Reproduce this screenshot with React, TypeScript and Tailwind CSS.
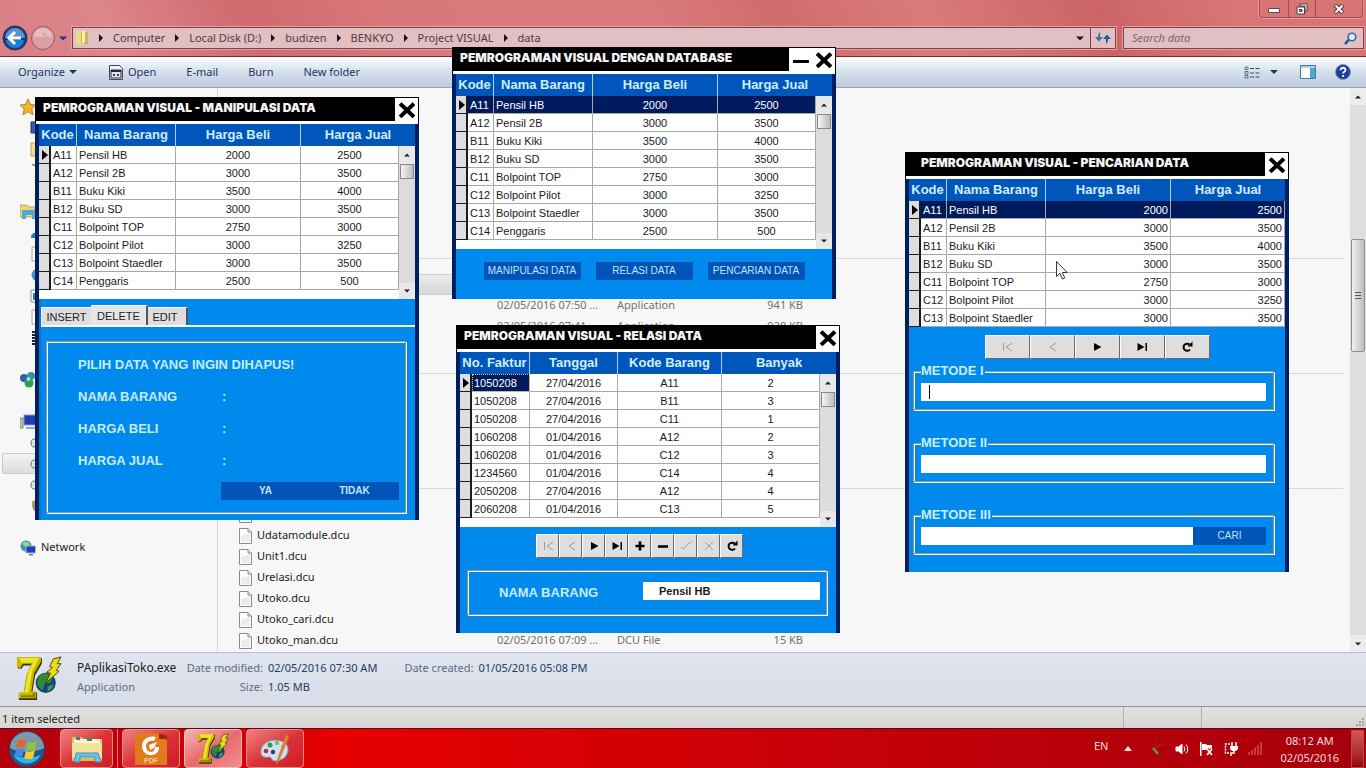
import type { ReactNode } from 'react';

const UI = "font-['Noto_Sans','Open_Sans',sans-serif]";
const FORM = "font-['Liberation_Sans',Arial,sans-serif]";

/* ---------- icons ---------- */

function DelphiIcon({ className }: { className: string }) {
  return (
    <svg viewBox="0 0 48 48" className={className} aria-hidden="true">
      <path d="M2 2h25v6l-7 12-3 18h5v8H3v-7h5l3-18 5-11H8l-2 3H2z" fill="#3d3a00" />
      <path d="M1 1h25v5l-7 12-3 19h5v7H3v-6h5l3-19 5-11H7l-2 4H1z" fill="#cdb800" />
      <path d="M3 2h21l-7 14-4 22h-4l4-22 5-9H6z" fill="#efe42c" />
      <path d="M18 38h2v5H5v-2h12z" fill="#8b7d00" />
      <circle cx="31" cy="28" r="10.500" fill="#163f7c" />
      <path d="M24 21c5-5 12-2 15 1l-3 6-6 1-2 7c-4-2-6-6-6-9z" fill="#2f8a3a" />
      <path d="M33 32l6-3c0 5-3 7-6 8z" fill="#3d9b48" />
      <path d="M39 3l8-2-4 7 4 0-5 7 3 1-14 12 5-10-4-1 6-5-3-1z" fill="#e8dc1e" stroke="#4a4600" strokeWidth="1" />
    </svg>
  );
}

function CloseMark() {
  return (
    <svg viewBox="0 0 18 18" className="size-[18px]" aria-hidden="true">
      <path d="M3.500 4L14.500 14.500M14.500 4L3.500 14.500" stroke="#000" strokeWidth="4" strokeLinecap="square" />
    </svg>
  );
}

function Crumb() {
  return (
    <svg viewBox="0 0 4 8" className="mx-2.5 h-2 w-1 shrink-0" aria-hidden="true">
      <path d="M0 0l4 4-4 4z" fill="#1c1012" />
    </svg>
  );
}

function Caret({ className }: { className: string }) {
  return (
    <svg viewBox="0 0 8 4" className={className} aria-hidden="true">
      <path d="M0 0h8L4 4z" fill="currentColor" />
    </svg>
  );
}

function FileIcon() {
  return (
    <svg viewBox="0 0 13 16" className="h-4 w-[13px] shrink-0" aria-hidden="true">
      <path d="M.5.500h8.500l3.500 3.500v11.500H.5z" fill="#fdfdfd" stroke="#8b8b8b" />
      <path d="M9 .5v3.500h3.500" fill="#e4e4e4" stroke="#8b8b8b" />
      <path d="M2 8l9-3v9H2z" fill="#ececec" />
    </svg>
  );
}

/* ---------- shared form parts ---------- */

type FormWindowProps = {
  title: string;
  place: string;
  titlePad?: string;
  minimize?: boolean;
  children: ReactNode;
};

function FormWindow({ title, place, titlePad = 'pl-[7px]', minimize = false, children }: FormWindowProps) {
  return (
    <section className={`absolute w-96 bg-[#008aee] ${FORM} ${place}`}>
      <header className="flex h-[27px] items-start border border-b-0 border-black bg-white">
        <div className={`flex h-[23px] flex-1 items-start bg-black ${titlePad}`}>
          <h2 className="font-['Inter',sans-serif] text-[12px] leading-5 font-black whitespace-nowrap text-[#f4f4f4]">{title}</h2>
        </div>
        {minimize && (
          <button aria-label="Minimize" className="flex h-[23px] w-[23px] items-center justify-center bg-white">
            <svg viewBox="0 0 16 4" className="mt-1 h-1 w-4" aria-hidden="true">
              <path d="M0 0h16v3H0z" fill="#000" />
            </svg>
          </button>
        )}
        <button aria-label="Close" className="flex h-[23px] w-[23px] items-center justify-center bg-white">
          <CloseMark />
        </button>
      </header>
      <div className="border-x-4 border-[#001f60]">{children}</div>
    </section>
  );
}

type Column = { label: string; width: string; align: string };

type GridProps = {
  columns: Column[];
  rows: string[][];
  scroll?: boolean;
  selected?: 'row' | 'cell' | 'none';
};

function DataGrid({ columns, rows, scroll = true, selected = 'none' }: GridProps) {
  return (
    <table className="w-full table-fixed border-separate border-spacing-0 bg-white text-[11px] text-[#1a1a1a]">
      <colgroup>
        <col className="w-3" />
        {columns.map((c) => (
          <col key={c.label} className={c.width} />
        ))}
        {scroll && <col className="w-4" />}
      </colgroup>
      <thead>
        <tr className="h-[22px] bg-[#0056ba] text-[13px] leading-5 text-[#cfeeff]">
          {columns.map((c, i) => {
            const last = i === columns.length - 1;
            return (
              <th
                key={c.label}
                colSpan={i === 0 || (last && scroll) ? 2 : 1}
                className={`p-0 text-center font-bold whitespace-nowrap ${last ? '' : 'border-r border-[#a9d4f5]'}`}
              >
                {c.label}
              </th>
            );
          })}
        </tr>
      </thead>
      <tbody>
        {rows.map((row, r) => (
          <tr key={r} className="h-[18px] leading-4">
            <td className="border-r-2 border-b border-[#1c1c1c] bg-[#dedede] p-0">
              {r === 0 && (
                <svg viewBox="0 0 6 10" className="ml-[3px] h-[10px] w-1.5" aria-hidden="true">
                  <path d="M0 0l6 5-6 5z" fill="#000" />
                </svg>
              )}
            </td>
            {row.map((cell, i) => {
              const on = r === 0 && (selected === 'row' || (selected === 'cell' && i === 0));
              const dotted = on && selected === 'cell';
              return (
                <td
                  key={i}
                  className={`overflow-hidden border-r border-b border-[#a8a8a8] px-0.5 py-0 whitespace-nowrap ${columns[i].align} ${
                    on ? 'bg-[#001a5e] text-white' : ''
                  } ${dotted ? 'outline-1 -outline-offset-1 outline-dotted outline-[#d8c890]' : ''}`}
                >
                  {cell}
                </td>
              );
            })}
            {scroll && r === 0 && (
              <td rowSpan={rows.length + 1} className="bg-[#dcdcdc] p-0 align-top">
                <div className="flex h-[153px] flex-col items-center text-[#222]">
                  <div className="flex h-[18px] w-full items-center justify-center bg-[#e8e8e8]">
                    <Caret className="h-1 w-1.5 rotate-180" />
                  </div>
                  <div className="h-[15px] w-[14px] border border-[#8a8a8a] bg-linear-to-r from-[#f4f4f4] to-[#bcbcc0]" />
                  <div className="flex-1" />
                  <div className="flex h-4 w-full items-center justify-center bg-[#e8e8e8]">
                    <Caret className="h-1 w-1.5" />
                  </div>
                </div>
              </td>
            )}
          </tr>
        ))}
        {scroll && (
          <tr className="h-[9px]">
            <td colSpan={columns.length + 1} className="p-0" />
          </tr>
        )}
      </tbody>
    </table>
  );
}

const NAV_SHAPES: Record<string, ReactNode> = {
  First: (
    <>
      <path d="M2.500 2v8" />
      <path d="M11 2L5 6l6 4" />
    </>
  ),
  Prior: <path d="M10 2L4 6l6 4" />,
  Next: <path d="M3 2L10.500 6 3 10z" fill="currentColor" stroke="none" />,
  Last: <path d="M1.500 2L8.500 6l-7 4zM9.500 2h1.500v8H9.500z" fill="currentColor" stroke="none" />,
  Insert: <path d="M6 1.500v9M1.500 6h9" strokeWidth="2.600" />,
  Delete: <path d="M1 6.500h10" strokeWidth="2.600" />,
  Post: <path d="M1 7l2.500 2L8 4l3.500-2" />,
  Cancel: <path d="M2 2l8 8M10 2l-8 8" />,
  Refresh: (
    <>
      <path d="M9 8.500A3.600 3.600 0 1 1 8.500 3.500" strokeWidth="2" />
      <path d="M6.500 5.500h5v-5z" fill="currentColor" stroke="none" />
    </>
  ),
};

type NavigatorProps = { items: string[]; width: string; disabled: string[] };

function Navigator({ items, width, disabled }: NavigatorProps) {
  return (
    <div className="flex">
      {items.map((name) => {
        const off = disabled.includes(name);
        return (
          <button
            key={name}
            aria-label={name}
            disabled={off}
            className={`flex h-6 items-center justify-center border border-t-white border-r-[#6a6a6a] border-b-[#6a6a6a] border-l-white bg-[#dedede] ${width} ${
              off ? 'text-[#9c9c9c]' : 'text-black'
            }`}
          >
            <svg viewBox="0 0 12 12" className="size-3" fill="none" stroke="currentColor" strokeWidth="1" aria-hidden="true">
              {NAV_SHAPES[name]}
            </svg>
          </button>
        );
      })}
    </div>
  );
}

const ETCHED = 'border border-[#8c98a2] shadow-[inset_1px_1px_0_#fff,1px_1px_0_#fff]';
const FLAT_BUTTON = 'h-[18px] bg-[#0054b8] text-center text-[10px] leading-[18px] text-[#bfe6ff]';

/* ---------- data ---------- */

const GOODS = [
  ['A11', 'Pensil HB', '2000', '2500'],
  ['A12', 'Pensil 2B', '3000', '3500'],
  ['B11', 'Buku Kiki', '3500', '4000'],
  ['B12', 'Buku SD', '3000', '3500'],
  ['C11', 'Bolpoint TOP', '2750', '3000'],
  ['C12', 'Bolpoint Pilot', '3000', '3250'],
  ['C13', 'Bolpoint Staedler', '3000', '3500'],
  ['C14', 'Penggaris', '2500', '500'],
];

const SALES = [
  ['1050208', '27/04/2016', 'A11', '2'],
  ['1050208', '27/04/2016', 'B11', '3'],
  ['1050208', '27/04/2016', 'C11', '1'],
  ['1060208', '01/04/2016', 'A12', '2'],
  ['1060208', '01/04/2016', 'C12', '3'],
  ['1234560', '01/04/2016', 'C14', '4'],
  ['2050208', '27/04/2016', 'A12', '4'],
  ['2060208', '01/04/2016', 'C13', '5'],
];

const goodsColumns = (align: string): Column[] => [
  { label: 'Kode', width: 'w-[26px]', align: 'text-left' },
  { label: 'Nama Barang', width: 'w-[99px]', align: 'text-left' },
  { label: 'Harga Beli', width: 'w-[125px]', align },
  { label: 'Harga Jual', width: 'w-auto', align },
];

const SALES_COLUMNS: Column[] = [
  { label: 'No. Faktur', width: 'w-[58px]', align: 'text-left' },
  { label: 'Tanggal', width: 'w-[88px]', align: 'text-center' },
  { label: 'Kode Barang', width: 'w-[104px]', align: 'text-center' },
  { label: 'Banyak', width: 'w-auto', align: 'text-center' },
];

/* ---------- the four forms ---------- */

function MainForm() {
  return (
    <FormWindow title="PEMROGRAMAN VISUAL DENGAN DATABASE" place="left-[452px] top-[47px]" minimize>
      <DataGrid columns={goodsColumns('text-center')} rows={GOODS} selected="row" />
      <div className="flex justify-center gap-[15px] pt-[13px] pb-[19px]">
        {['MANIPULASI DATA', 'RELASI DATA', 'PENCARIAN DATA'].map((t) => (
          <button key={t} className={`w-[97px] whitespace-nowrap ${FLAT_BUTTON}`}>
            {t}
          </button>
        ))}
      </div>
    </FormWindow>
  );
}

function ManipulationForm() {
  return (
    <FormWindow title="PEMROGRAMAN VISUAL - MANIPULASI DATA" place="left-[35px] top-[97px]">
      <DataGrid columns={goodsColumns('text-center')} rows={GOODS} />
      <div className="border-l-2 border-[#0078d4] pt-1.5 pb-[7px]">
        <div className="flex items-end border-b-2 border-white text-[11px] text-[#222]">
          <button className="h-[18px] w-[50px] border-t border-l border-white bg-[#dedede] leading-4">INSERT</button>
          <button className="h-5 w-[57px] border-t border-r-2 border-t-white border-r-[#555] bg-[#e6e6e6] leading-4">DELETE</button>
          <button className="h-[18px] w-10 border-t border-r-2 border-t-white border-r-[#555] bg-[#dedede] pr-1 leading-4">EDIT</button>
        </div>
        <div className="pt-3.5 pr-[9px] pl-[5px]">
          <div className={`h-[172px] pt-[7px] pl-[31px] ${ETCHED}`}>
            <div className="text-[13px] leading-8 font-bold text-[#c8ecff]">
              <p>PILIH DATA YANG INGIN DIHAPUS!</p>
              {['NAMA BARANG', 'HARGA BELI', 'HARGA JUAL'].map((t) => (
                <p key={t} className="grid grid-cols-[144px_1fr]">
                  <span>{t}</span>
                  <span>:</span>
                </p>
              ))}
            </div>
            <div className="mt-[5px] flex justify-end pr-1.5">
              <button className={`w-[89px] font-bold ${FLAT_BUTTON}`}>YA</button>
              <button className={`w-[89px] font-bold ${FLAT_BUTTON}`}>TIDAK</button>
            </div>
          </div>
        </div>
      </div>
    </FormWindow>
  );
}

function RelationForm() {
  return (
    <FormWindow title="PEMROGRAMAN VISUAL - RELASI DATA" place="left-[456px] top-[325px]">
      <DataGrid columns={SALES_COLUMNS} rows={SALES} selected="cell" />
      <div className="pt-[7px] pr-[9px] pb-[18px] pl-[7px]">
        <div className="pl-[69px]">
          <Navigator
            items={['First', 'Prior', 'Next', 'Last', 'Insert', 'Delete', 'Post', 'Cancel', 'Refresh']}
            width="w-[23px]"
            disabled={['First', 'Prior', 'Post', 'Cancel']}
          />
        </div>
        <div className={`mt-3 flex h-[45px] items-center justify-between pr-1.5 pl-[31px] ${ETCHED}`}>
          <label htmlFor="nama-barang" className="text-[13px] font-bold text-[#c8ecff]">
            NAMA BARANG
          </label>
          <input
            id="nama-barang"
            readOnly
            defaultValue="Pensil HB"
            className="mb-1 h-[18px] w-[177px] bg-white pl-4 text-[11px] font-bold text-[#1a1a1a] outline-none"
          />
        </div>
      </div>
    </FormWindow>
  );
}

function Method({ id, label, children }: { id: string; label: string; children: ReactNode }) {
  return (
    <fieldset className={`mr-[11px] ml-1 h-[47px] pr-1.5 pl-[7px] ${ETCHED}`}>
      <legend id={id} className="bg-[#008aee] pr-px text-[13px] leading-4 font-bold text-[#c8ecff]">
        {label}
      </legend>
      <div className="relative mt-1 flex pr-px">{children}</div>
    </fieldset>
  );
}

function SearchForm() {
  return (
    <FormWindow title="PEMROGRAMAN VISUAL - PENCARIAN DATA" place="left-[905px] top-[152px]" titlePad="pl-[15px]">
      <DataGrid columns={goodsColumns('text-right')} rows={GOODS.slice(0, 7)} scroll={false} selected="row" />
      <div className="pt-2 pb-[18px]">
        <div className="flex justify-center">
          <Navigator items={['First', 'Prior', 'Next', 'Last', 'Refresh']} width="w-[45px]" disabled={['First', 'Prior']} />
        </div>
        <div className="mt-1 flex flex-col gap-[25px]">
          <Method id="metode-1" label="METODE I">
            <input aria-labelledby="metode-1" className="h-[18px] min-w-0 flex-1 bg-white px-2 text-[11px] outline-none" />
            <span className="absolute top-0.5 left-2 h-3.5 w-px bg-black" />
          </Method>
          <Method id="metode-2" label="METODE II">
            <input aria-labelledby="metode-2" className="h-[18px] min-w-0 flex-1 bg-white px-2 text-[11px] outline-none" />
          </Method>
          <Method id="metode-3" label="METODE III">
            <input aria-labelledby="metode-3" className="h-[18px] min-w-0 flex-1 bg-white px-2 text-[11px] outline-none" />
            <button className={`w-[73px] ${FLAT_BUTTON}`}>CARI</button>
          </Method>
        </div>
      </div>
    </FormWindow>
  );
}

/* ---------- file explorer ---------- */

function AddressRow() {
  const path = ['Computer', 'Local Disk (D:)', 'budizen', 'BENKYO', 'Project VISUAL', 'data'];
  return (
    <div className="flex h-[22px] items-center pr-0.5 pl-0.5 text-[#4f3b3e]">
      <button aria-label="Back" className="size-[26px] shrink-0">
        <svg viewBox="0 0 26 26" aria-hidden="true">
          <circle cx="13" cy="13" r="12" fill="#0f3f8f" stroke="#3a2a40" />
          <path d="M3 13a10 10 0 0 1 20 0z" fill="#5d92cf" />
          <path d="M4 15a9 8 0 0 0 18 0z" fill="#1c7fd4" />
          <path d="M13 7l-6 6 6 6M8 13h11" fill="none" stroke="#fff" strokeWidth="3" />
        </svg>
      </button>
      <button aria-label="Forward" className="ml-0.5 size-[26px] shrink-0">
        <svg viewBox="0 0 26 26" aria-hidden="true">
          <circle cx="13" cy="13" r="11.500" fill="#dba0a3" stroke="#8d5a62" />
          <path d="M4 12a9 9 0 0 1 18 0z" fill="#e8bcbe" />
          <path d="M13 8l5 5-5 5M18 13H7" fill="none" stroke="#d3a5a8" strokeWidth="2" />
        </svg>
      </button>
      <button aria-label="Recent pages" className="mx-[3px] text-[#1c3a78]">
        <Caret className="h-[5px] w-2" />
      </button>
      <div className="ml-0.5 flex h-[22px] min-w-0 flex-1 items-center border border-[#7e4046] bg-[#e1bfc2] shadow-[0_0_0_1px_#dfa2a5]">
        <svg viewBox="0 0 14 16" className="ml-0.5 h-4 w-3.5 shrink-0" aria-hidden="true">
          <path d="M1 1h6v14H1z" fill="#e9dc8a" />
          <path d="M6 2h7v12H6z" fill="#c9b455" />
          <path d="M7 1h3v11L7 15z" fill="#f6eeb2" />
        </svg>
        <nav className="flex items-center whitespace-nowrap">
          {path.map((p) => (
            <span key={p} className="flex items-center">
              <Crumb />
              <a href="#" className="leading-5">
                {p}
              </a>
            </span>
          ))}
        </nav>
        <div className="flex-1" />
        <button aria-label="Previous locations" className="mr-1.5 text-[#2a1518]">
          <Caret className="h-[5px] w-2" />
        </button>
        <button aria-label="Refresh" className="flex h-full w-[25px] items-center justify-center border-l border-[#7e4046]">
          <svg viewBox="0 0 16 14" className="h-3.5 w-4" aria-hidden="true">
            <path d="M5 1v5H8L4 10.500 0 6h3c0-3 1-4 2-5z" fill="#2d7ba6" />
            <path d="M11 13V8H8l4-4.500L16 8h-3c0 3-1 4-2 5z" fill="#235f96" />
          </svg>
        </button>
      </div>
      <div className="ml-[7px] flex h-[22px] w-[241px] items-center border border-[#7e4046] bg-[#e1bfc2] pr-1.5 pl-2 shadow-[0_0_0_1px_#dfa2a5]">
        <input
          aria-label="Search data"
          placeholder="Search data"
          className="min-w-0 flex-1 bg-transparent italic outline-none placeholder:text-[#80666a]"
        />
        <svg viewBox="0 0 13 13" className="size-[13px]" fill="none" aria-hidden="true">
          <path d="M1 12l4-4.500" stroke="#1d4f98" strokeWidth="2.400" />
          <circle cx="8" cy="5" r="3.800" fill="#e4eef8" stroke="#2d66ac" strokeWidth="1.600" />
        </svg>
      </div>
    </div>
  );
}

function CommandBar() {
  return (
    <div className="flex h-[31px] shrink-0 items-center border-b border-[#93a3bd] bg-linear-to-b from-white via-[#dbe5f0] via-40% to-[#bccade] pr-[15px] pl-[18px] text-[#22365c]">
      <button className="flex items-center gap-1">
        Organize <Caret className="h-1 w-2" />
      </button>
      <button className="ml-8 flex items-center gap-[5px]">
        <svg viewBox="0 0 14 15" className="h-[15px] w-3.5" aria-hidden="true">
          <path d="M.5.500h10l3 3v11H.5z" fill="#f2f2f2" stroke="#444" />
          <path d="M2 5h10v8H2z" fill="#dfe3ec" stroke="#1f2a55" />
          <path d="M2 5h10v2H2z" fill="#1f2a55" />
          <path d="M4 9h2v2H4zM8 9h2v2H8z" fill="#444" />
        </svg>
        Open
      </button>
      <button className="ml-[30px]">E-mail</button>
      <button className="ml-[30px]">Burn</button>
      <button className="ml-[30px]">New folder</button>
      <div className="flex-1" />
      <button aria-label="Change your view" className="flex items-center gap-2.5">
        <svg viewBox="0 0 16 13" className="h-[13px] w-4" fill="none" aria-hidden="true">
          <path d="M1 1h3v2.500H1zM1 5.500h3V8H1zM1 9.500h3V12H1z" stroke="#5a6f8a" />
          <path d="M6 2.500h4M11.500 2.500H15.500M6 7h4M11.500 7H15.500M6 11h4M11.500 11H15.500" stroke="#3a4d66" strokeWidth="1.200" />
        </svg>
        <Caret className="h-1 w-2" />
      </button>
      <button aria-label="Show the preview pane" className="ml-[22px]">
        <svg viewBox="0 0 16 14" className="h-3.5 w-4" aria-hidden="true">
          <path d="M.5.500h15v13H.5z" fill="#fff" stroke="#3c7a9e" />
          <path d="M1 1h14v2H1z" fill="#a8d4ea" />
          <path d="M10 3h5v10h-5z" fill="#4fa6d0" />
        </svg>
      </button>
      <button aria-label="Get help" className="ml-[19px]">
        <svg viewBox="0 0 16 16" className="size-4" aria-hidden="true">
          <circle cx="8" cy="8" r="7.500" fill="#1c3f9c" stroke="#8593b5" />
          <path d="M5.500 6.200C5.500 3 10.500 3 10.500 6c0 1.800-2.400 1.800-2.400 3.600" fill="none" stroke="#fff" strokeWidth="1.800" />
          <circle cx="8.100" cy="12" r="1.100" fill="#fff" />
        </svg>
      </button>
    </div>
  );
}

const GLYPHS: Record<string, ReactNode> = {
  star: <path d="M8 0l2.400 5.400L16 6l-4.200 3.800L13 16l-5-3.200L3 16l1.200-6.200L0 6l5.600-.6z" fill="#f2b52c" stroke="#a8701a" strokeWidth=".8" />,
  desktop: <path d="M1 2h14v11H1z" fill="#2f63ad" stroke="#16335f" />,
  folder: <path d="M1 2h6v1h8v12H1z" fill="#f0dc8c" stroke="#c0a24a" />,
  recent: <path d="M2 3a4 4 0 0 1 5 5v6l4 1" fill="none" stroke="#8c98a6" strokeWidth="2" />,
  library: (
    <>
      <path d="M0 1h7l2 2h6v10H0z" fill="#ecd67c" stroke="#b99a3e" strokeWidth=".8" />
      <path d="M2 6h14v9h-4v-4H6v4H2z" fill="#55a7d6" />
    </>
  ),
  music: <path d="M1 12a4 4 0 0 1 5-4V2h9v3H9v8H1z" fill="#2d7cc4" />,
  page: <path d="M2 1h12v14H2z" fill="#fff" stroke="#9aa4b0" />,
  ball: <circle cx="8" cy="8" r="6.500" fill="#3d96d2" />,
  picture: (
    <>
      <path d="M1 2h14v12H1z" fill="#fff" stroke="#7794ae" />
      <path d="M3 5h10v7H3z" fill="#2b7f92" />
    </>
  ),
  film: <path d="M4 1v14M8 1v14" stroke="#222" strokeWidth="4" strokeDasharray="2 1" />,
  group: (
    <>
      <circle cx="4" cy="6" r="4" fill="#2c5fae" />
      <circle cx="11" cy="4" r="4" fill="#2f8fb5" />
      <circle cx="9" cy="11" r="4.500" fill="#2f9e55" />
      <circle cx="8.500" cy="7" r="2" fill="#a8e0b0" />
    </>
  ),
  computer: (
    <>
      <path d="M4 1h12v10H4z" fill="#1f3bb5" stroke="#8d9bb5" />
      <path d="M0 4h3v10H0z" fill="#bcc6b4" stroke="#7d8a7d" />
      <path d="M6 13h9v2H6z" fill="#9aa3b5" />
    </>
  ),
  drive: <path d="M4 4h12v8H4c-4 0-4-8 0-8z" fill="#e2e2e2" stroke="#6d6d6d" />,
  lock: <path d="M3 3h12v11H6c-3-2-4-6-3-11z" fill="#c4942c" stroke="#8f938f" />,
  network: (
    <>
      <circle cx="6" cy="6" r="5.500" fill="#3a9b9f" />
      <path d="M2 4c3-4 6-2 8 0L7 8z" fill="#8fd3a6" />
      <path d="M6 6h9.500v7H6z" fill="#1d3fc0" stroke="#a7b3cc" />
      <path d="M9 14h4v1.500H9z" fill="#6e7a94" />
    </>
  ),
};

type Place = { icon?: string; label?: string; child?: boolean; on?: boolean };

const PLACES: Place[] = [
  { icon: 'star' },
  { icon: 'desktop', child: true },
  { icon: 'folder', child: true },
  { icon: 'recent', child: true },
  {},
  { icon: 'library' },
  { icon: 'music', child: true },
  { icon: 'page', child: true },
  { icon: 'ball', child: true },
  { icon: 'picture', child: true },
  { icon: 'page', child: true },
  { icon: 'film', child: true },
  {},
  { icon: 'group' },
  {},
  { icon: 'computer' },
  { icon: 'drive', child: true },
  { icon: 'drive', child: true, on: true },
  { icon: 'drive', child: true },
  { icon: 'lock', child: true },
  {},
  { icon: 'network', label: 'Network' },
];

type FileRow = { name?: string; date?: string; type?: string; size?: string; on?: boolean };

const FILE_GROUPS: FileRow[][] = [
  [
    { on: true },
    { date: '02/05/2016 07:50 ...', type: 'Application', size: '941 KB' },
    { date: '02/05/2016 07:41 ...', type: 'Application', size: '928 KB' },
    {},
  ],
  [{}, {}, {}, {}],
  [
    {},
    { name: 'Udatamodule.dcu' },
    { name: 'Unit1.dcu' },
    { name: 'Urelasi.dcu' },
    { name: 'Utoko.dcu' },
    { name: 'Utoko_cari.dcu' },
    { name: 'Utoko_man.dcu', date: '02/05/2016 07:09 ...', type: 'DCU File', size: '15 KB' },
  ],
];

function ExplorerBody() {
  return (
    <div className="flex min-h-0 flex-1 overflow-hidden bg-[#f7f7f7]">
      <aside className="w-[218px] shrink-0 border-r border-[#d3d8de] pt-2">
        <ul>
          {PLACES.map((p, i) => (
            <li
              key={i}
              className={`flex h-[21px] items-center gap-[5px] ${
                p.on
                  ? 'ml-0.5 rounded-xs border border-[#c8c8c8] bg-linear-to-b from-[#f4f4f4] to-[#dcdcdc] pl-[27px]'
                  : p.child
                    ? 'pl-[30px]'
                    : 'pl-5'
              }`}
            >
              {p.icon && (
                <svg viewBox="0 0 16 16" className="size-4" aria-hidden="true">
                  {GLYPHS[p.icon]}
                </svg>
              )}
              {p.label && (
                <a href="#" className="text-[#222]">
                  {p.label}
                </a>
              )}
            </li>
          ))}
        </ul>
      </aside>
      <main className="min-w-0 flex-1 pt-[155px] pr-[7px] pl-[15px]">
        {FILE_GROUPS.map((group, g) => (
          <div key={g}>
            <div className="flex h-[31px] items-center">
              <div className="h-px w-full bg-[#d8d8d8]" />
            </div>
            {group.map((f, i) => (
              <div
                key={i}
                className={`grid h-[21px] w-[574px] grid-cols-[258px_120px_1fr_60px] items-center pr-1 pl-1.5 text-[#707070] ${
                  f.on ? 'rounded-xs border border-[#cfcfcf] bg-linear-to-b from-[#ececec] to-[#d6d6d6]' : ''
                }`}
              >
                <span className="flex items-center gap-[5px] text-[#1c1c1c]">
                  <FileIcon />
                  {f.name}
                </span>
                <span>{f.date}</span>
                <span>{f.type}</span>
                <span className="text-right">{f.size}</span>
              </div>
            ))}
          </div>
        ))}
      </main>
      <div className="flex w-4 shrink-0 flex-col items-center bg-[#dedede] text-[#222]">
        <div className="flex h-[17px] w-full items-center justify-center bg-[#ededed]">
          <Caret className="h-1 w-1.5 rotate-180" />
        </div>
        <div className="flex-[134]" />
        <div className="flex w-3.5 flex-[112] flex-col items-center justify-center gap-0.5 rounded-xs border border-[#8f8f8f] bg-linear-to-r from-[#f0f0f0] to-[#bdbdbd]">
          <div className="h-px w-1.5 bg-[#555]" />
          <div className="h-px w-1.5 bg-[#555]" />
          <div className="h-px w-1.5 bg-[#555]" />
        </div>
        <div className="flex-[284]" />
        <div className="flex h-[17px] w-full items-center justify-center bg-[#ededed]">
          <Caret className="h-1 w-1.5" />
        </div>
      </div>
    </div>
  );
}

function DetailsPane() {
  return (
    <div className="flex h-[54px] shrink-0 items-start border-t border-[#b4c1d8] bg-linear-to-b from-[#dfe4ee] to-[#d8dde7] pt-[3px] pl-4 leading-[19px] text-[#5d6b85]">
      <DelphiIcon className="h-[46px] w-[46px]" />
      <div className="mt-0.5 ml-[15px] w-[109px] whitespace-nowrap">
        <p className="text-xs leading-[19px] text-[#1c1c1c]">PAplikasiToko.exe</p>
        <p>Application</p>
      </div>
      <dl className="mt-0.5 grid grid-cols-[77px_auto] gap-x-[5px] whitespace-nowrap">
        <dt className="text-right">Date modified:</dt>
        <dd className="text-[#263c62]">02/05/2016 07:30 AM</dd>
        <dt className="text-right">Size:</dt>
        <dd className="text-[#263c62]">1.05 MB</dd>
      </dl>
      <dl className="mt-0.5 ml-[27px] flex gap-[5px] whitespace-nowrap">
        <dt>Date created:</dt>
        <dd className="text-[#263c62]">01/05/2016 05:08 PM</dd>
      </dl>
    </div>
  );
}

function StatusBar() {
  return (
    <div className="flex h-[22px] shrink-0 items-stretch border-t border-[#8e9096] bg-linear-to-b from-[#e2e0e0] to-[#d8d4d4] text-[#222]">
      <span className="flex-1 pt-0.5 pl-0.5 leading-5">1 item selected</span>
      <span className="w-[78px] border-l border-[#b4b0b0]" />
      <span className="flex w-[165px] items-end justify-end border-l border-[#b4b0b0] pr-0.5 pb-0.5">
        <svg viewBox="0 0 8 8" className="size-2" fill="#a5a0a0" aria-hidden="true">
          <path d="M6 0h2v2H6zM3 3h2v2H3zM6 3h2v2H6zM0 6h2v2H0zM3 6h2v2H3zM6 6h2v2H6z" />
        </svg>
      </span>
    </div>
  );
}

function Explorer() {
  return (
    <div className="flex min-h-0 flex-1 flex-col">
      <div className="h-[57px] shrink-0 border-b border-[#7a2b33] bg-[linear-gradient(65deg,#d98086_0%,#dc858a_9%,#d06a6e_19%,#d9787a_30%,#da7a7c_48%,#d06c6e_57%,#da7a7b_68%,#cc6466_80%,#d97576_90%,#d87474_100%)]">
        <div className="flex h-[27px] items-start justify-end pr-[3px]">
          <div className="flex h-[18px] rounded-b border border-t-0 border-[#a04c52] shadow-[0_0_0_1px_#e29b9d]">
            <button aria-label="Minimize" className="flex w-7 items-center justify-center">
              <svg viewBox="0 0 12 5" className="mt-1 h-[5px] w-3" aria-hidden="true">
                <path d="M.5.500h11v4H.5z" fill="#fff" stroke="#5a4a50" />
              </svg>
            </button>
            <button aria-label="Restore" className="flex w-[27px] items-center justify-center border-l border-[#a04c52]">
              <svg viewBox="0 0 12 12" className="size-3" fill="none" aria-hidden="true">
                <path d="M4 1h7v7H9V3H4z" fill="#fff" stroke="#4a3c44" />
                <path d="M1 4h7.500v7H1z" fill="#fff" stroke="#4a3c44" />
                <path d="M3.500 6.500h2.500v2H3.500z" fill="#c77" stroke="#4a3c44" />
              </svg>
            </button>
            <button aria-label="Close" className="flex w-[47px] items-center justify-center border-l border-[#a04c52]">
              <svg viewBox="0 0 12 10" className="h-2.5 w-3" aria-hidden="true">
                <path d="M2 1l8 8M10 1L2 9" stroke="#4a3c44" strokeWidth="4" />
                <path d="M2.500 1.500l7 7M9.500 1.500l-7 7" stroke="#fff" strokeWidth="2" />
              </svg>
            </button>
          </div>
        </div>
        <AddressRow />
      </div>
      <CommandBar />
      <ExplorerBody />
      <DetailsPane />
      <StatusBar />
    </div>
  );
}

/* ---------- taskbar ---------- */

function TaskButton({ label, active = false, children }: { label: string; active?: boolean; children: ReactNode }) {
  return (
    <button
      aria-label={label}
      className={`flex h-[39px] w-[58px] items-center justify-center rounded-sm border ${
        active
          ? 'border-[#f7c0c0] bg-linear-to-br from-[#f6b4b4] via-[#ea6a6e] to-[#f08d90]'
          : 'border-[#f08a8c] bg-linear-to-br from-[#ee8084] via-[#dc3238] to-[#d01c22]'
      }`}
    >
      {children}
    </button>
  );
}

function Taskbar() {
  return (
    <footer className="flex h-10 shrink-0 items-center border-t border-[#5a0a0e] bg-linear-to-r from-[#b0000c] via-[#e60000] via-25% to-[#a6000c]">
      <button aria-label="Start" className="ml-2 size-[38px]">
        <svg viewBox="0 0 38 38" aria-hidden="true">
          <circle cx="19" cy="19" r="18" fill="#1d5688" stroke="#5b2a3a" />
          <path d="M2 18a17 16 0 0 1 34 0c-9 5-25 5-34 0z" fill="#7d98ad" />
          <path d="M5 24c6 5 22 5 28 0a15 15 0 0 1-28 0z" fill="#33b4e6" />
          <path d="M10 11c3-2 6-1 8 0l-2 7c-2-1-5-2-8 0z" fill="#e8622a" />
          <path d="M20 12c3 1 5 1 9-1l-2 8c-3 2-6 1-9 0z" fill="#8cc63c" />
          <path d="M8 20c3-2 5-1 8 0l-2 7c-2-1-5-1-8 1z" fill="#3c8ede" />
          <path d="M18 21c3 1 6 1 9-1l-2 8c-3 2-6 1-9 0z" fill="#fbc92e" />
        </svg>
      </button>
      <div className="ml-3.5 flex gap-1">
        <div className="flex border-r border-[#e87478] pr-1">
          <button
            aria-label="Windows Explorer"
            className="flex h-[39px] w-[53px] items-center justify-center rounded-sm border border-[#f08a8c] bg-linear-to-br from-[#ee8084] via-[#dc3238] to-[#d01c22]"
          >
            <svg viewBox="0 0 32 28" className="h-7 w-8" aria-hidden="true">
              <path d="M1 2h10l2 2h18v22H1z" fill="#d8bf62" />
              <path d="M3 4h26v4H3z" fill="#f7f3dc" />
              <path d="M5 2h4v3H5zM16 3h5v3h-5z" fill="#3c8a58" />
              <path d="M1 8h30v15H1z" fill="#f3e39a" />
              <path d="M5 18h22l3 9h-6v-5H9v5H3z" fill="#6cc0e4" stroke="#3f93bd" />
            </svg>
          </button>
        </div>
        <TaskButton label="Foxit PDF">
          <svg viewBox="0 0 32 32" className="size-8" aria-hidden="true">
            <path d="M0 0h24l8 8v24H0z" fill="#e07a1c" />
            <path d="M24 0l8 3v3h-8z" fill="#a8230e" />
            <path d="M21 4C14 2 7 6 7 13c0 6 5 10 11 9 4-1 6-4 6-8h-4c0 3-2 5-4 5-3 0-5-3-5-6 0-4 4-6 8-5z" fill="#fff" />
            <path d="M14 12l8-3-3 6-4 2z" fill="#fff" />
            <text x="16" y="30" textAnchor="middle" fontSize="7" fontWeight="700" fontFamily="Liberation Sans" fill="#f8cf98">
              PDF
            </text>
          </svg>
        </TaskButton>
        <TaskButton label="PAplikasiToko" active>
          <DelphiIcon className="size-8" />
        </TaskButton>
        <TaskButton label="Paint">
          <svg viewBox="0 0 32 30" className="h-[30px] w-8" aria-hidden="true">
            <path d="M2 20C0 12 8 6 16 6c9 0 14 5 13 11-1 7-8 10-13 10-4 0-3-4-6-4-4 1-7 0-8-3z" fill="#d3dfee" stroke="#7a90ac" />
            <circle cx="7" cy="17" r="2.300" fill="#cc2a2a" />
            <circle cx="11" cy="11" r="2.500" fill="#2f9a56" />
            <circle cx="18" cy="9" r="2.300" fill="#7cc24a" />
            <circle cx="24" cy="13" r="2.200" fill="#e0a430" />
            <circle cx="14" cy="18" r="2.200" fill="#2c3c70" />
            <path d="M27 0l3 3-9 22-3 5-1-1 2-6z" fill="#d8803a" />
          </svg>
        </TaskButton>
      </div>
      <div className="flex-1" />
      <div className="flex items-center text-[#f6dcdc]">
        <span className="mb-1">EN</span>
        <svg viewBox="0 0 8 5" className="ml-4 h-[5px] w-2" aria-hidden="true">
          <path d="M0 5h8L4 0z" fill="#f4e0e0" />
        </svg>
        <svg viewBox="0 0 14 14" className="ml-[17px] size-3.5" fill="none" aria-hidden="true">
          <path d="M4 6l5 6" stroke="#4fa03a" strokeWidth="2.600" />
          <path d="M6 6l6-4" stroke="#b52a20" />
        </svg>
        <svg viewBox="0 0 14 14" className="ml-3 size-3.5" fill="none" stroke="#fff" aria-hidden="true">
          <path d="M1 5h2.500L7 2v10L3.500 9H1z" fill="#fff" />
          <path d="M9 4.500q2 2.500 0 5M11 2.500q3.500 4.500 0 9" />
        </svg>
        <svg viewBox="0 0 15 14" className="ml-2.5 h-3.5 w-[15px]" aria-hidden="true">
          <path d="M1 0h1.500v14H1zM3 2h4l1 1h5v6H8L7 8H3z" fill="#fff" />
          <path d="M8 7l5 6M13 7l-5 6" stroke="#c0181c" strokeWidth="3.500" />
          <path d="M8 7l5 6M13 7l-5 6" stroke="#fff" strokeWidth="1.500" />
        </svg>
        <svg viewBox="0 0 14 14" className="ml-2.5 size-3.5" fill="none" stroke="#fff" aria-hidden="true">
          <path d="M6 2H1.500v9H6" strokeWidth="1.500" strokeDasharray="2 1" />
          <path d="M8 0v4M12 0v4" strokeWidth="1.500" />
          <path d="M6 4h8v3l-2 2H8L6 7z" fill="#fff" stroke="none" />
          <path d="M10 8v3H7v3" strokeWidth="1.500" />
        </svg>
        <svg viewBox="0 0 14 13" className="ml-2.5 h-[13px] w-3.5" fill="#c8383e" aria-hidden="true">
          <path d="M0 10h2v3H0zM3 8h2v5H3zM6 5.500h2V13H6zM9 3h2v10H9zM12 0h2v13h-2z" />
        </svg>
        <div className="ml-[18px] text-center leading-[17px]">
          <p>08:12 AM</p>
          <p>02/05/2016</p>
        </div>
        <button
          aria-label="Show desktop"
          className="mr-0.5 ml-3 h-[38px] w-[13px] border border-[#c9444a] bg-linear-to-b from-[#d2565c] to-[#98000a]"
        />
      </div>
    </footer>
  );
}

export default function App() {
  return (
    <div className={`relative flex h-screen flex-col overflow-hidden bg-[#f7f7f7] text-[11px] ${UI}`}>
      <Explorer />
      <Taskbar />
      <MainForm />
      <ManipulationForm />
      <RelationForm />
      <SearchForm />
      <svg viewBox="0 0 12 19" className="absolute top-[261px] left-[1056px] h-[19px] w-3" aria-hidden="true">
        <path d="M.5.500v15l3.500-3.300L6.300 18l2.400-1-2.400-5.500h4.900z" fill="#fff" stroke="#333" />
      </svg>
    </div>
  );
}
